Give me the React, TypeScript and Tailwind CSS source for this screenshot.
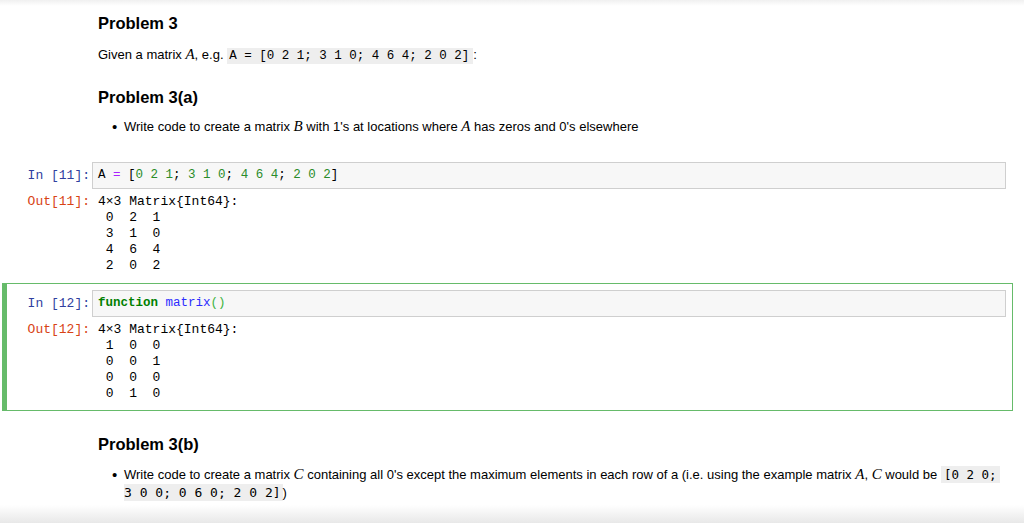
import clsx from 'clsx'

const mono = "font-['Liberation_Mono','Courier_New',monospace]"
const sansMono = "font-['DejaVu_Sans_Mono',monospace]"
const math = "font-['Liberation_Serif',serif] italic text-[15px] leading-none"

function Prompt({ kind, n }: { kind: 'in' | 'out'; n: number }) {
  return (
    <div
      className={clsx(
        mono,
        'w-[85px] shrink-0 pr-[2px] text-right text-[13px]',
        kind === 'in' ? 'leading-[27px] text-[#303f9f]' : 'leading-[16px] text-[#d84315]'
      )}
    >
      {kind === 'in' ? `In [${n}]:` : `Out[${n}]:`}
    </div>
  )
}

function CodeCell({
  n,
  selected,
  input,
  output,
}: {
  n: number
  selected?: boolean
  input: React.ReactNode
  output: string
}) {
  return (
    <div
      className={clsx(
        'ml-[2px] w-[1011px] border border-l-[5px] pt-[6px] pb-[8px] pr-[6px]',
        selected ? 'border-[#66bb6a]' : 'border-transparent'
      )}
    >
      <div className="flex">
        <Prompt kind="in" n={n} />
        <div
          className={clsx(
            mono,
            'h-[27px] flex-1 border border-[#cfcfcf] bg-[#f7f7f7] px-[5px] text-[12.5px] leading-[25px] whitespace-pre'
          )}
        >
          {input}
        </div>
      </div>
      <div className="mt-[5px] flex">
        <Prompt kind="out" n={n} />
        <pre className={clsx(mono, 'pl-[6px] text-[13px] leading-[16px] text-black')}>{output}</pre>
      </div>
    </div>
  )
}

function Bullet({ children, className }: { children: React.ReactNode; className?: string }) {
  return (
    <div className={clsx('flex pl-[112px] text-[13px] text-black', className)}>
      <span className="w-[12px] shrink-0 text-[15px]">•</span>
      <div>{children}</div>
    </div>
  )
}

export default function App() {
  const num = 'text-[#2a8c2a]'
  return (
    <div className="relative h-[523px] w-[1024px] overflow-hidden bg-white font-['Liberation_Sans',Arial,sans-serif] text-black">
      <div className="h-[6px] bg-gradient-to-b from-[#f0f0f0] to-white" />

      <h2 className="mt-[7px] pl-[98px] text-[16.5px] leading-[20px] font-bold">Problem 3</h2>
      <p className="mt-[12px] h-[20px] pl-[98px] text-[13px] leading-[20px]">
        Given a matrix <span className={math}>A</span>, e.g.{' '}
        <code className={clsx(mono, 'bg-[#eeeeee] py-[1px] pr-[4px] pl-[2px] text-[12.5px] whitespace-pre')}>
          A = [0 2 1; 3 1 0; 4 6 4; 2 0 2]
        </code>
        :
      </p>

      <h2 className="mt-[22px] pl-[98px] text-[16.5px] leading-[20px] font-bold">Problem 3(a)</h2>
      <Bullet className="mt-[10px] h-[20px] leading-[20px]">
        Write code to create a matrix <span className={math}>B</span> with 1's at locations where{' '}
        <span className={math}>A</span> has zeros and 0's elsewhere
      </Bullet>

      <div className="mt-[18px]">
        <CodeCell
          n={11}
          input={
            <>
              A <span className="text-[#aa22ff]">=</span> [<span className={num}>0 2 1</span>;{' '}
              <span className={num}>3 1 0</span>; <span className={num}>4 6 4</span>;{' '}
              <span className={num}>2 0 2</span>]
            </>
          }
          output={'4×3 Matrix{Int64}:\n 0  2  1\n 3  1  0\n 4  6  4\n 2  0  2'}
        />
        <CodeCell
          n={12}
          selected
          input={
            <>
              <span className="font-bold text-[#008000]">function</span>{' '}
              <span className="text-[#2c2cff]">matrix</span>
              <span className="text-[#3cb33c]">()</span>
            </>
          }
          output={'4×3 Matrix{Int64}:\n 1  0  0\n 0  0  1\n 0  0  0\n 0  1  0'}
        />
      </div>

      <h2 className="mt-[23px] pl-[98px] text-[16.5px] leading-[20px] font-bold">Problem 3(b)</h2>
      <Bullet className="mt-[12px] leading-[18px]">
        Write code to create a matrix <span className={math}>C</span> containing all 0's except the maximum
        elements in each row of a (i.e. using the example matrix <span className={math}>A</span>,{' '}
        <span className={math}>C</span> would be{' '}
        <code className={clsx(sansMono, 'bg-[#eeeeee] px-[3px] py-[1px] text-[12.5px] whitespace-pre')}>[0 2 0;</code>
        <br />
        <code className={clsx(sansMono, 'bg-[#eeeeee] py-[1px] pr-[2px] text-[13px] whitespace-pre')}>
          3 0 0; 0 6 0; 2 0 2]
        </code>
        )
      </Bullet>

      <div className="pointer-events-none absolute right-0 bottom-0 left-0 h-[18px] bg-gradient-to-b from-transparent to-[#e8e8e8]" />
    </div>
  )
}
